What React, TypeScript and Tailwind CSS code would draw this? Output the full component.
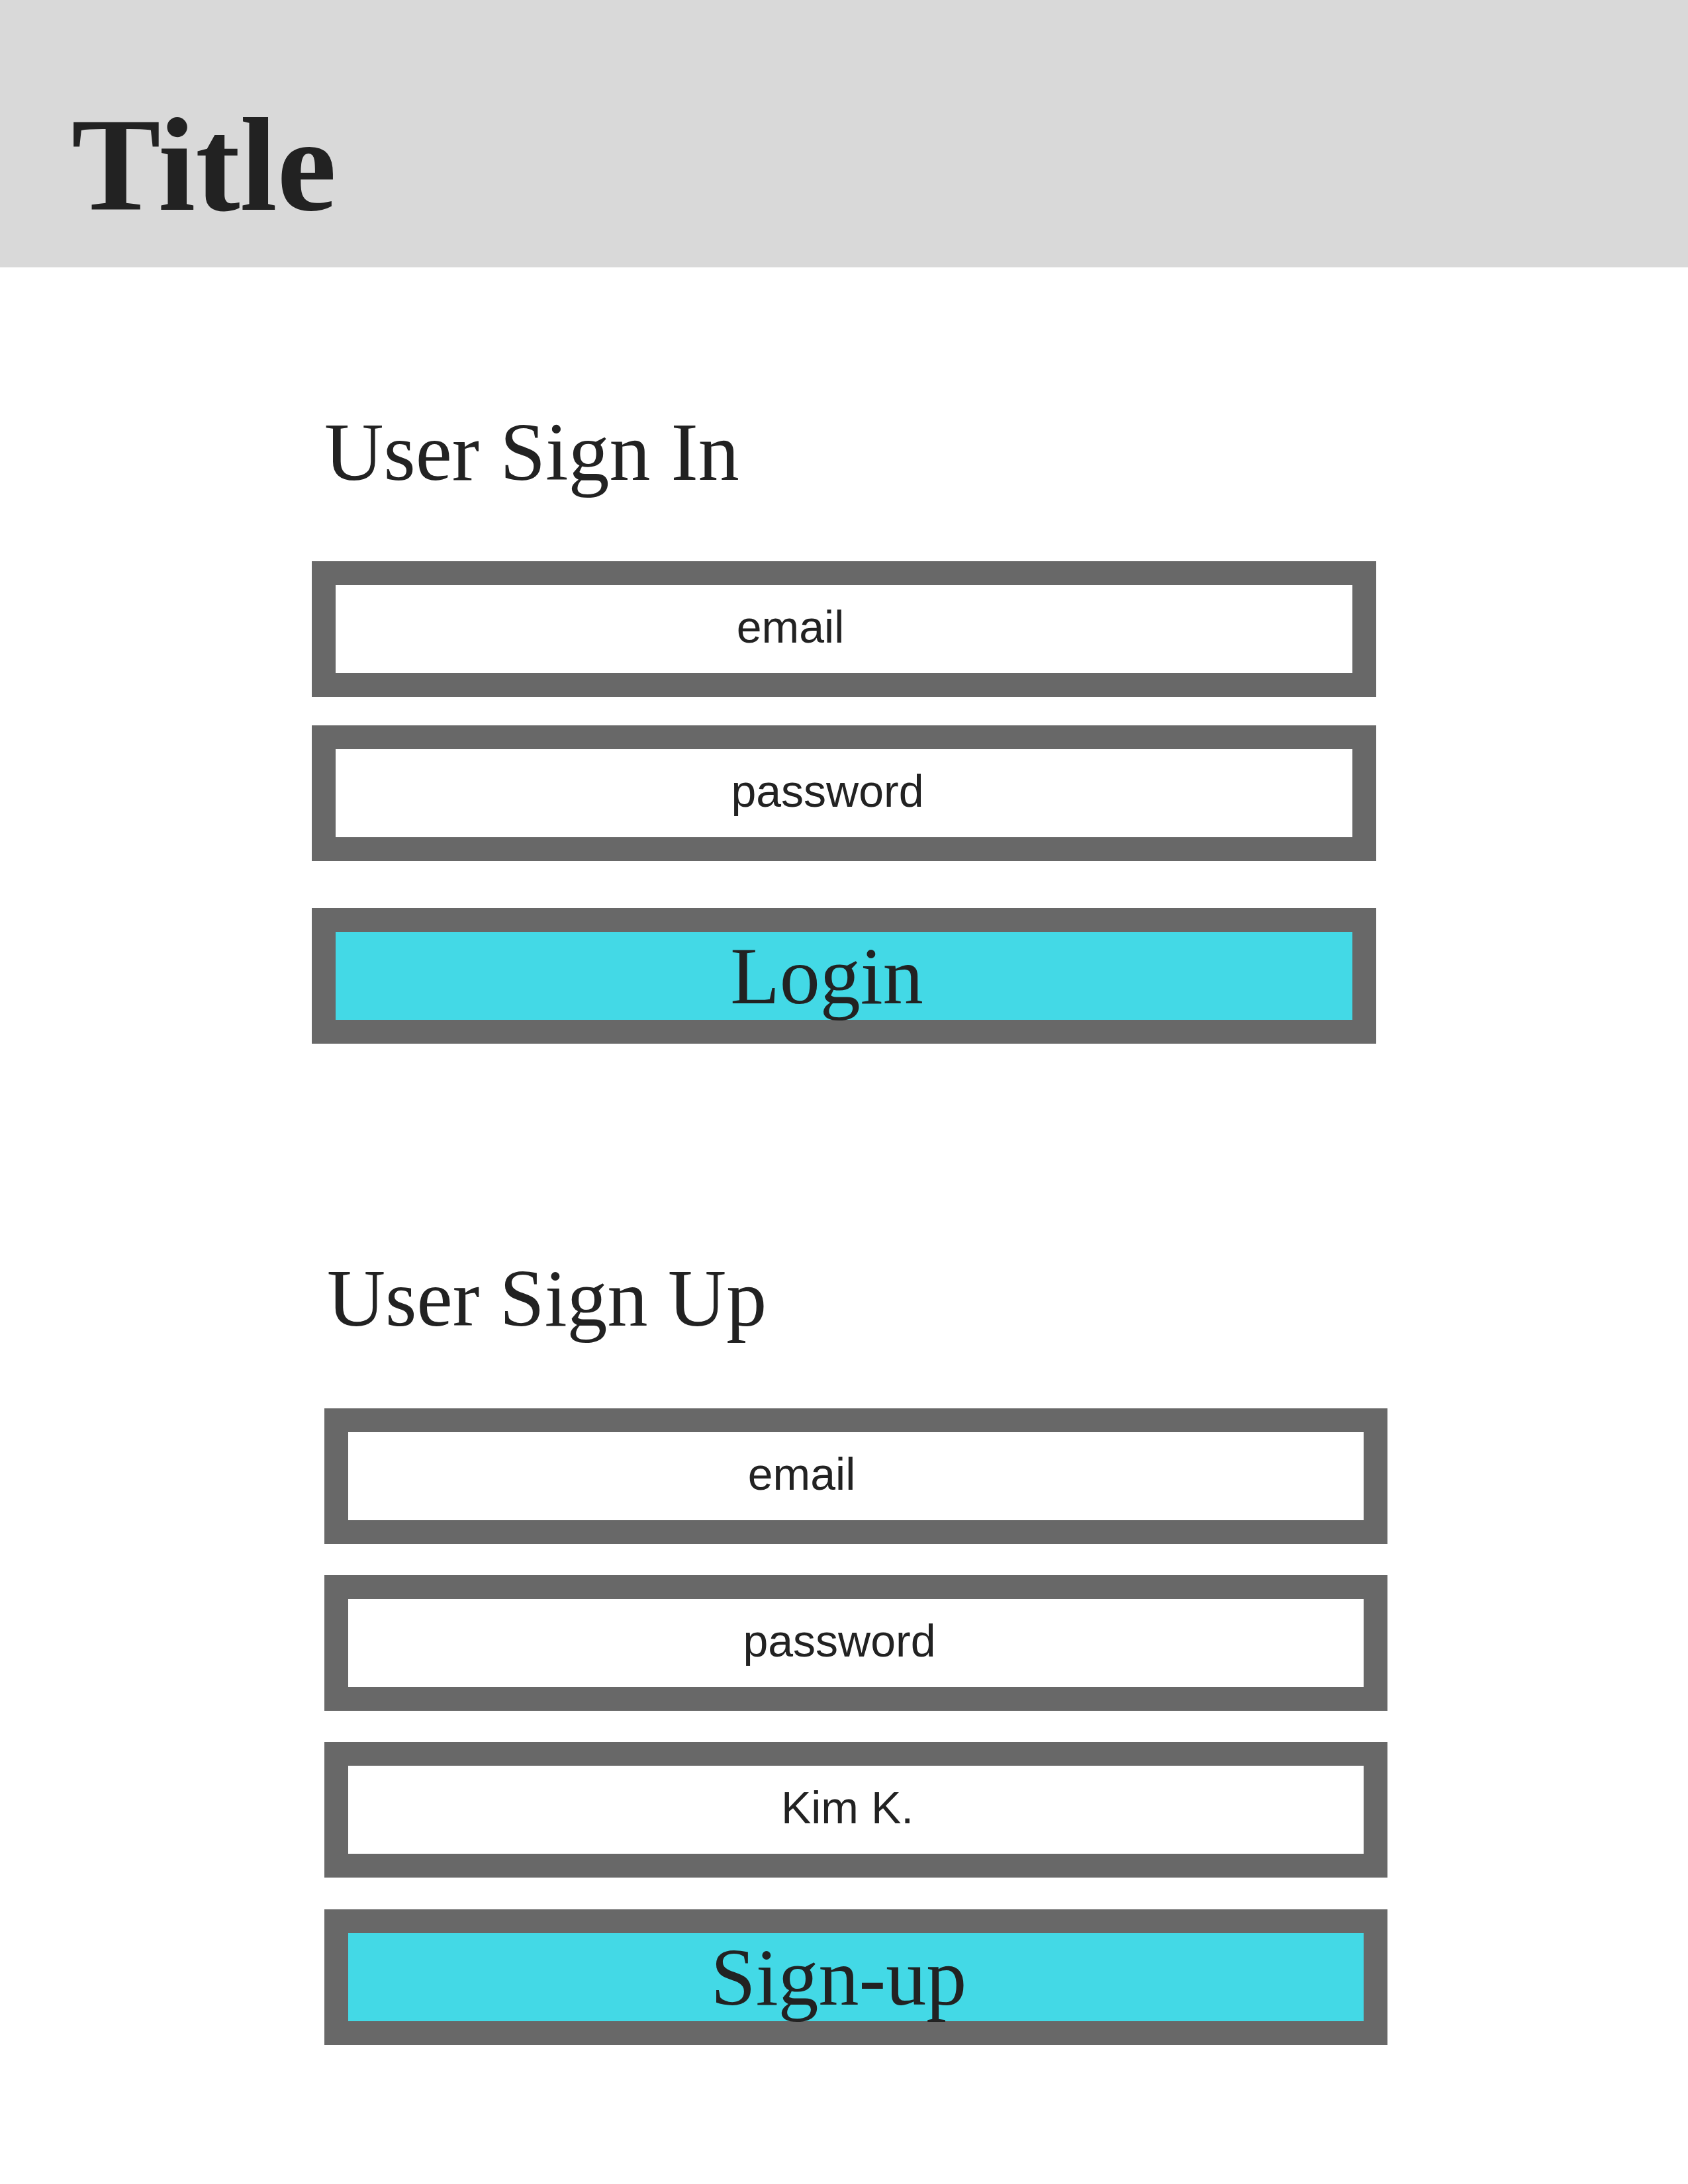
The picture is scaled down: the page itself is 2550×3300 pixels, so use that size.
type Field = { label: string; offset: string; button?: boolean };

const signIn: Field[] = [
  { label: "email", offset: "pr-[162px]" },
  { label: "password", offset: "pr-[50px]" },
  { label: "Login", offset: "pr-[52px]", button: true },
];

const signUp: Field[] = [
  { label: "email", offset: "pr-[164px]" },
  { label: "password", offset: "pr-[50px]" },
  { label: "Kim K.", offset: "pr-[26px]" },
  { label: "Sign-up", offset: "pr-[52px]", button: true },
];

function Box({ field, className }: { field: Field; className: string }) {
  return (
    <div className={`h-[205px] border-[36px] border-[#686868] ${className}`}>
      <div
        className={`flex h-full items-center justify-center ${field.offset} ${
          field.button
            ? "bg-[#43d9e6] font-['Liberation_Serif',serif] text-[122px]"
            : "bg-white pb-[7px] font-['Liberation_Sans',Arial,sans-serif] text-[68px]"
        } leading-none text-[#222222]`}
      >
        {field.label}
      </div>
    </div>
  );
}

export default function App() {
  return (
    <div className="h-[3300px] w-[2550px] bg-white">
      <header className="h-[404px] bg-[#d9d9d9] pl-[108px] pt-[148px]">
        <h1 className="font-['Liberation_Serif',serif] text-[202px] font-bold leading-none text-[#222222]">Title</h1>
      </header>

      <section className="ml-[471px] mt-[218px] w-[1608px]">
        <h2 className="pl-[19px] font-['Liberation_Serif',serif] text-[124px] font-normal leading-none text-[#222222]">
          User Sign In
        </h2>
        <Box field={signIn[0]} className="mt-[102px]" />
        <Box field={signIn[1]} className="mt-[43px]" />
        <Box field={signIn[2]} className="mt-[71px]" />
      </section>

      <section className="ml-[490px] mt-[324px] w-[1606px]">
        <h2 className="pl-[4px] font-['Liberation_Serif',serif] text-[122px] font-normal leading-none text-[#222222]">
          User Sign Up
        </h2>
        <Box field={signUp[0]} className="mt-[105px]" />
        <Box field={signUp[1]} className="mt-[47px]" />
        <Box field={signUp[2]} className="mt-[47px]" />
        <Box field={signUp[3]} className="mt-[48px]" />
      </section>
    </div>
  );
}
